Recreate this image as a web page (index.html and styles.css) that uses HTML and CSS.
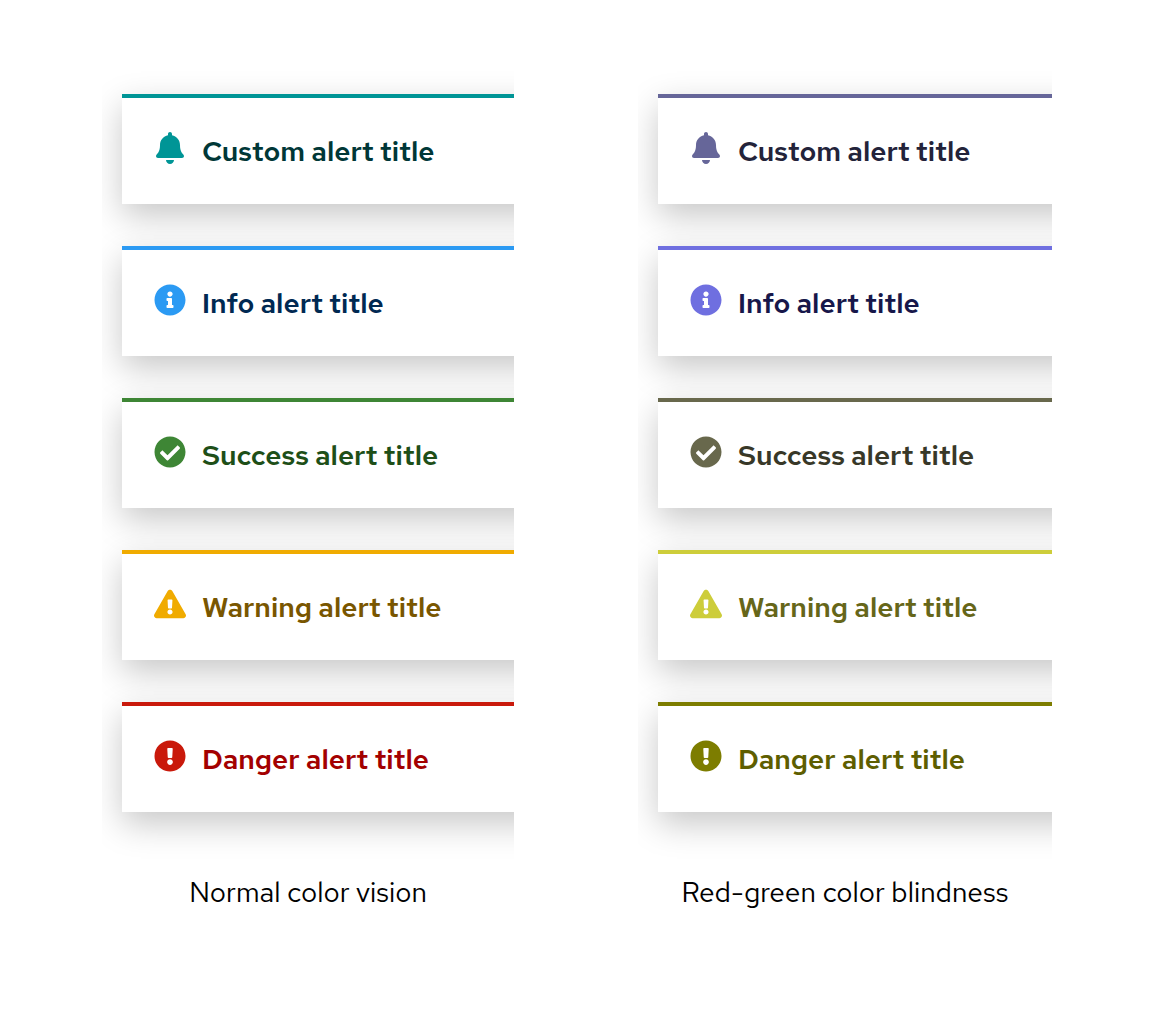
FILE: index.html
```
<!DOCTYPE html>
<html lang="en">
<head>
<meta charset="utf-8">
<meta name="viewport" content="width=device-width, initial-scale=1">
<title>Alert colors and color vision</title>
<link rel="stylesheet" href="styles.css">
</head>
<body>
<svg class="sprite" aria-hidden="true">
  <symbol id="bell" viewBox="0 0 448 512"><path d="M224 512c35.320 0 63.970-28.650 63.970-64H160.030c0 35.350 28.650 64 63.970 64zm215.390-149.710c-19.320-20.760-55.470-51.990-55.470-154.290 0-77.700-54.480-139.900-127.940-155.160V32c0-17.670-14.320-32-31.980-32s-31.980 14.330-31.980 32v20.840C118.560 68.100 64.080 130.300 64.080 208c0 102.300-36.150 133.530-55.470 154.290-6 6.450-8.660 14.160-8.610 21.710.110 16.400 12.980 32 32.100 32h383.800c19.120 0 32-15.600 32.100-32 .050-7.550-2.610-15.270-8.610-21.710z"/></symbol>
  <symbol id="info" viewBox="0 0 512 512"><path d="M256 8C119.043 8 8 119.083 8 256c0 136.997 111.043 248 248 248s248-111.003 248-248C504 119.083 392.957 8 256 8zm0 110c23.196 0 42 18.804 42 42s-18.804 42-42 42-42-18.804-42-42 18.804-42 42-42zm56 254c0 6.627-5.373 12-12 12h-88c-6.627 0-12-5.373-12-12v-24c0-6.627 5.373-12 12-12h12v-64h-12c-6.627 0-12-5.373-12-12v-24c0-6.627 5.373-12 12-12h64c6.627 0 12 5.373 12 12v100h12c6.627 0 12 5.373 12 12v24z"/></symbol>
  <symbol id="check" viewBox="0 0 512 512"><path d="M504 256c0 136.967-111.033 248-248 248S8 392.967 8 256 119.033 8 256 8s248 111.033 248 248zM227.314 387.314l184-184c6.248-6.248 6.248-16.379 0-22.627l-22.627-22.627c-6.248-6.249-16.379-6.249-22.628 0L216 308.118l-70.059-70.059c-6.248-6.248-16.379-6.248-22.628 0l-22.627 22.627c-6.248 6.248-6.248 16.379 0 22.627l104 104c6.249 6.249 16.379 6.249 22.628.001z"/></symbol>
  <symbol id="triangle" viewBox="0 0 576 512"><path d="M569.517 440.013C587.975 472.007 564.806 512 527.940 512H48.054c-36.937 0-59.999-40.055-41.577-71.987L246.423 23.985c18.467-32.009 64.720-31.951 83.154 0l239.940 416.028zM288 354c-25.405 0-46 20.595-46 46s20.595 46 46 46 46-20.595 46-46-20.595-46-46-46zm-43.673-165.346l7.418 136c.347 6.364 5.609 11.346 11.982 11.346h48.546c6.373 0 11.635-4.982 11.982-11.346l7.418-136c.375-6.874-5.098-12.654-11.982-12.654h-63.383c-6.884 0-12.356 5.780-11.981 12.654z"/></symbol>
  <symbol id="exclamation" viewBox="0 0 512 512"><path d="M504 256c0 136.997-111.043 248-248 248S8 392.997 8 256C8 119.083 119.043 8 256 8s248 111.083 248 248zm-248 50c-25.405 0-46 20.595-46 46s20.595 46 46 46 46-20.595 46-46-20.595-46-46-46zm-43.673-165.346l7.418 136c.347 6.364 5.609 11.346 11.982 11.346h48.546c6.373 0 11.635-4.982 11.982-11.346l7.418-136c.375-6.874-5.098-12.654-11.982-12.654h-63.383c-6.884 0-12.356 5.780-11.981 12.654z"/></symbol>
</svg>
<main class="comparison">
  <figure class="panel normal">
    <div class="stack">
      <div class="alert custom"><svg class="icon" aria-hidden="true"><use href="#bell"/></svg><h2 class="title">Custom alert title</h2></div>
      <div class="alert info"><svg class="icon" aria-hidden="true"><use href="#info"/></svg><h2 class="title">Info alert title</h2></div>
      <div class="alert success"><svg class="icon" aria-hidden="true"><use href="#check"/></svg><h2 class="title">Success alert title</h2></div>
      <div class="alert warning"><svg class="icon" aria-hidden="true"><use href="#triangle"/></svg><h2 class="title">Warning alert title</h2></div>
      <div class="alert danger"><svg class="icon" aria-hidden="true"><use href="#exclamation"/></svg><h2 class="title">Danger alert title</h2></div>
    </div>
    <figcaption class="caption">Normal color vision</figcaption>
  </figure>
  <figure class="panel red-green">
    <div class="stack">
      <div class="alert custom"><svg class="icon" aria-hidden="true"><use href="#bell"/></svg><h2 class="title">Custom alert title</h2></div>
      <div class="alert info"><svg class="icon" aria-hidden="true"><use href="#info"/></svg><h2 class="title">Info alert title</h2></div>
      <div class="alert success"><svg class="icon" aria-hidden="true"><use href="#check"/></svg><h2 class="title">Success alert title</h2></div>
      <div class="alert warning"><svg class="icon" aria-hidden="true"><use href="#triangle"/></svg><h2 class="title">Warning alert title</h2></div>
      <div class="alert danger"><svg class="icon" aria-hidden="true"><use href="#exclamation"/></svg><h2 class="title">Danger alert title</h2></div>
    </div>
    <figcaption class="caption">Red-green color blindness</figcaption>
  </figure>
</main>
</body>
</html>
```
FILE: styles.css
```
body {
  margin: 0;
  background: #fff;
  font-family: "Red Hat Text", Inter, "Liberation Sans", sans-serif;
}

.sprite {
  display: none;
}

.comparison {
  display: grid;
  grid-template-columns: 412fr 414fr;
  gap: 124px;
  padding: 70px 102px;
}

.panel {
  margin: 0;
  min-width: 0;
}

/* Clips the alerts, which run on past the panel's right edge */
.stack {
  display: flex;
  flex-direction: column;
  gap: 42px;
  padding: 24px 0 52px 20px;
  overflow: hidden;
}

.alert {
  display: flex;
  align-items: center;
  gap: 16px;
  margin-right: -48px;
  padding: 32px;
  border-top: 4px solid var(--accent);
  background: #fff;
  box-shadow: 0 12px 32px 0 rgba(3, 3, 3, 0.22);
}

.icon {
  flex: none;
  width: 32px;
  height: 32px;
  margin-bottom: 6px;
  fill: var(--accent);
}

.title {
  margin: 0;
  color: var(--text);
  font-size: 28px;
  font-weight: 600;
  line-height: 42px;
  white-space: nowrap;
}

.caption {
  margin-top: 7px;
  color: #000;
  font-size: 28px;
  font-weight: 400;
  line-height: 42px;
  text-align: center;
}

.normal .custom { --accent: #009596; --text: #003737; }
.normal .info { --accent: #2b9af3; --text: #002952; }
.normal .success { --accent: #3e8635; --text: #1e4f18; }
.normal .warning { --accent: #f0ab00; --text: #795600; }
.normal .danger { --accent: #c9190b; --text: #a30000; }

.red-green .custom { --accent: #666699; --text: #23233a; }
.red-green .info { --accent: #6f6fe0; --text: #17174a; }
.red-green .success { --accent: #68684c; --text: #383828; }
.red-green .warning { --accent: #cdcd3a; --text: #666619; }
.red-green .danger { --accent: #7d7d00; --text: #5e5e00; }
```
